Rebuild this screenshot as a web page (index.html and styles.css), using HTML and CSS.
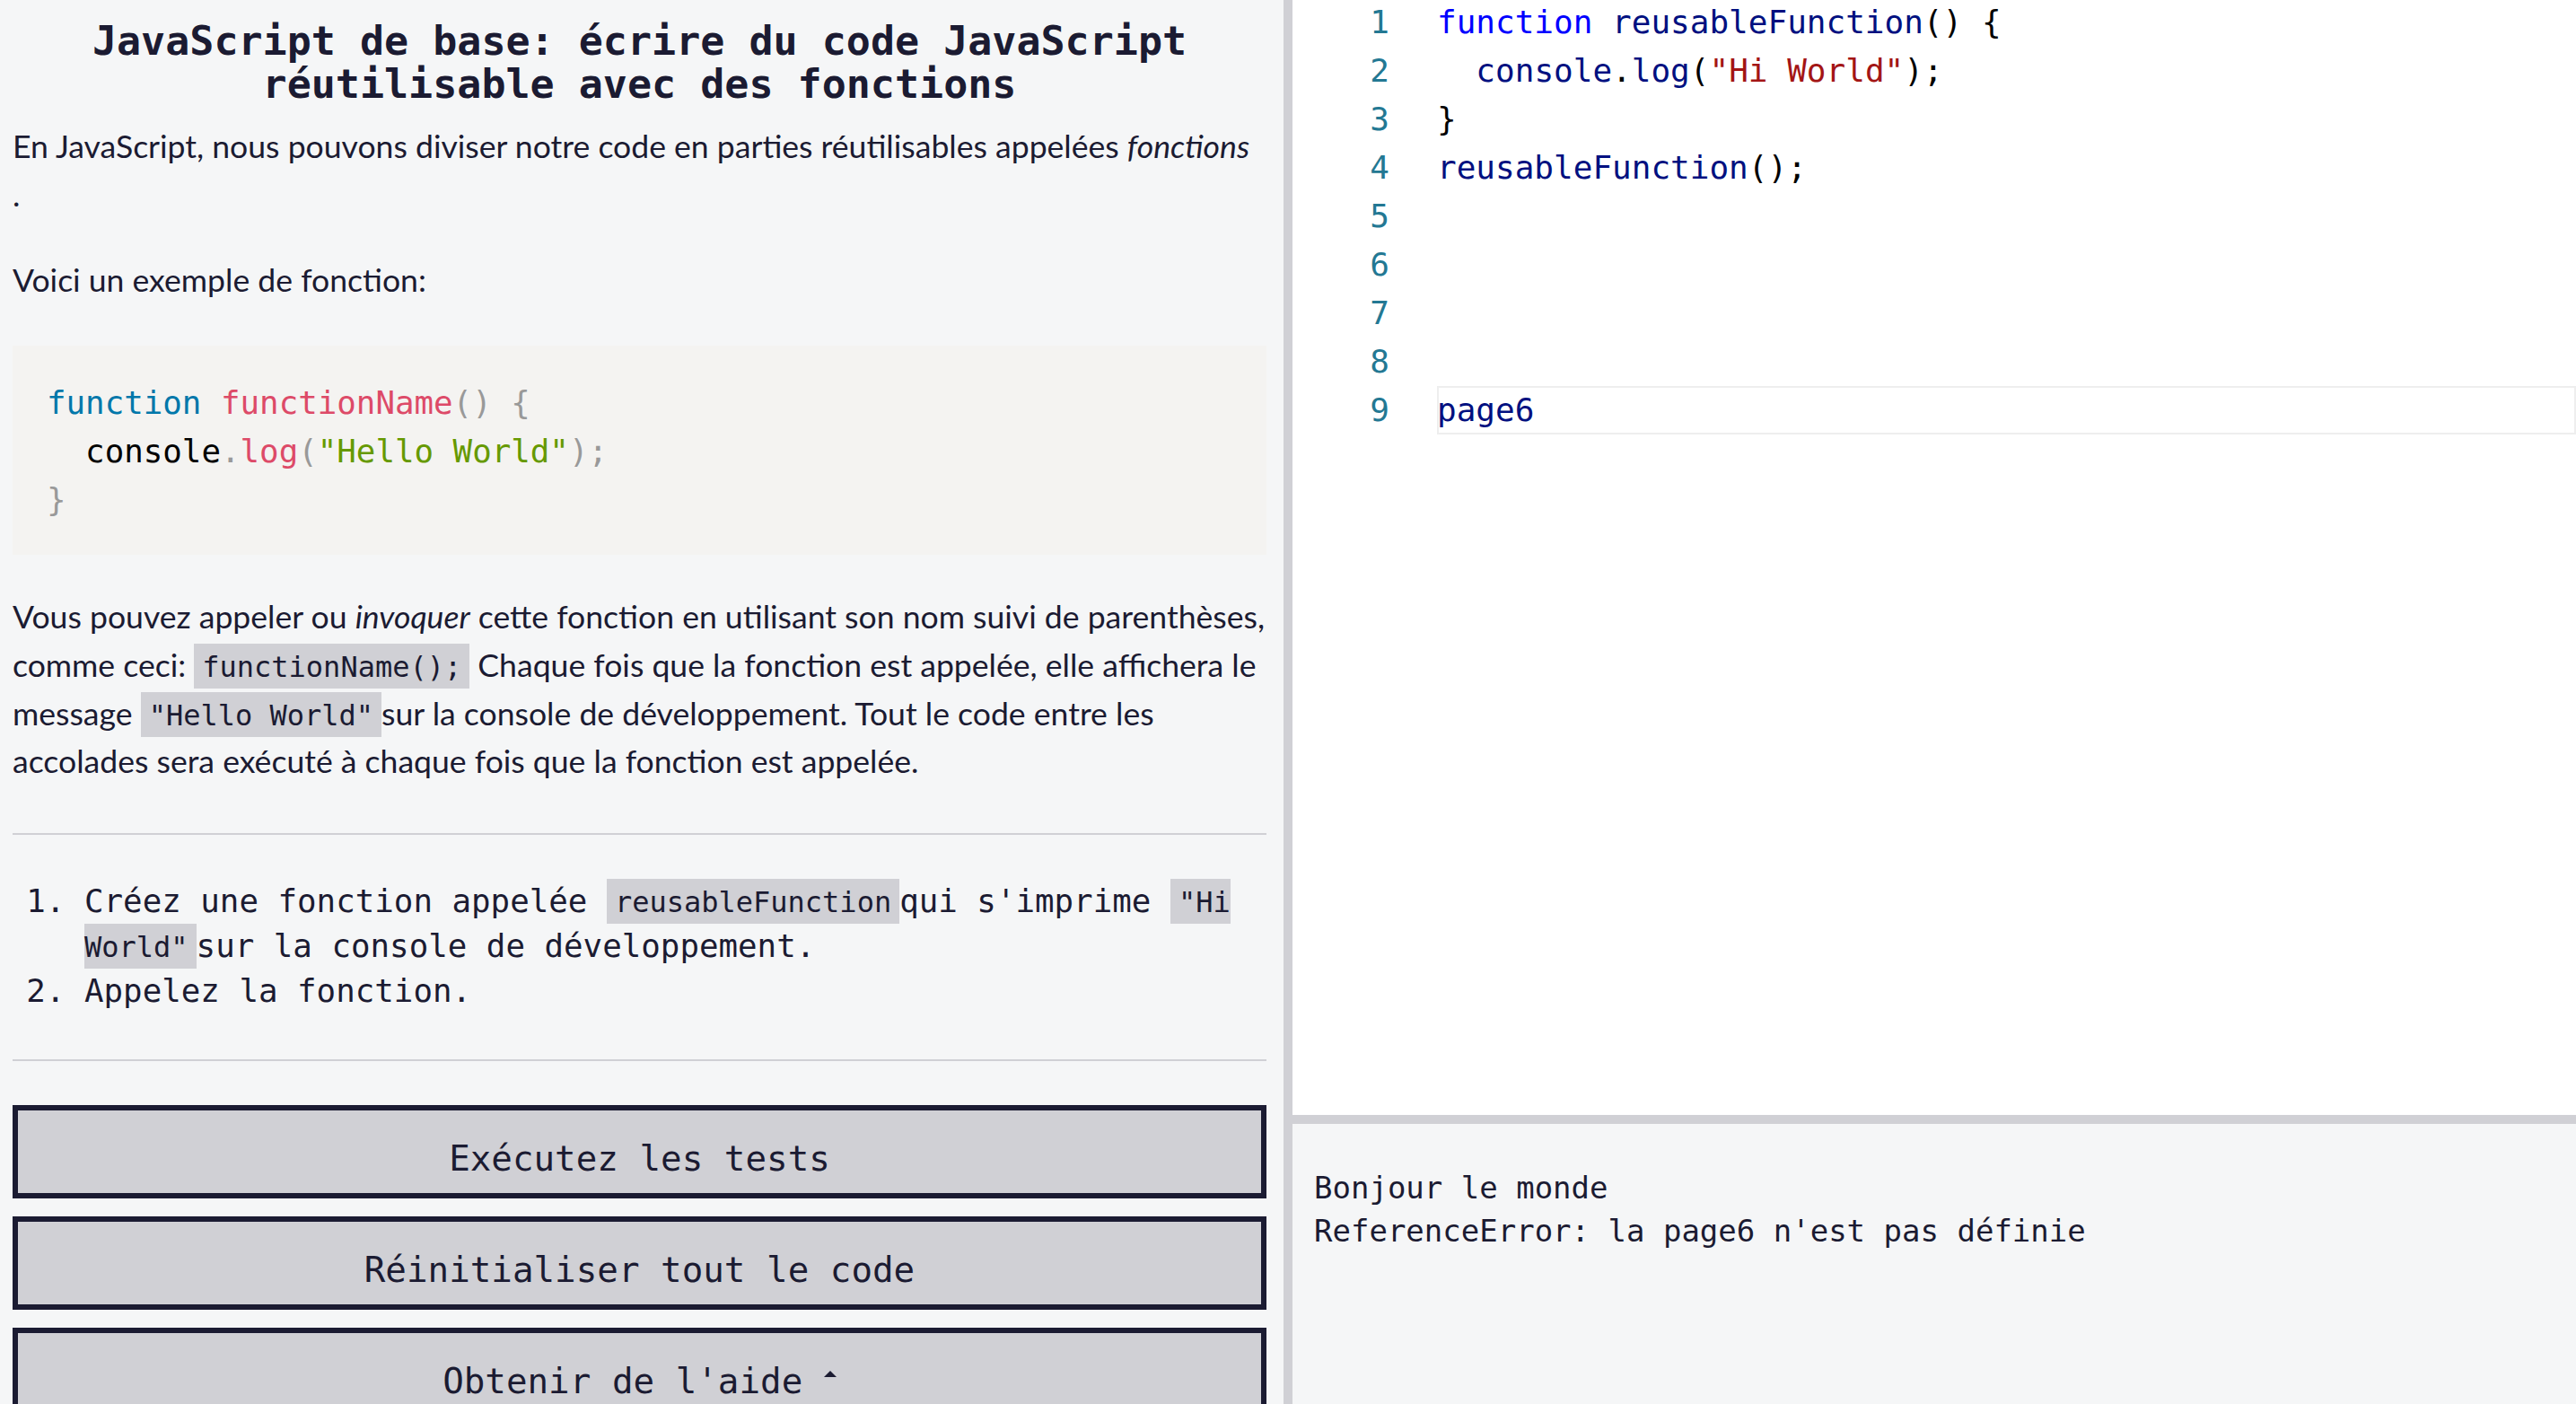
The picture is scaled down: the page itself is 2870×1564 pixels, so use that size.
FILE: index.html
```html
<!DOCTYPE html>
<html lang="fr">
<head>
<meta charset="utf-8">
<title>JavaScript de base: écrire du code JavaScript réutilisable avec des fonctions</title>
<link rel="stylesheet" href="styles.css">
</head>
<body>
<div class="app">
  <section class="instructions">
    <h1 class="title">JavaScript de base: écrire du code JavaScript réutilisable avec des fonctions</h1>
    <p class="text">En JavaScript, nous pouvons diviser notre code en parties réutilisables appelées <em>fonctions</em><br>.</p>
    <p class="text">Voici un exemple de fonction:</p>
    <pre class="example"><code><span class="tk">function</span> <span class="tf">functionName</span><span class="tp">()</span> <span class="tp">{</span>
  console<span class="tp">.</span><span class="tf">log</span><span class="tp">(</span><span class="ts">"Hello World"</span><span class="tp">);</span>
<span class="tp">}</span></code></pre>
    <p class="text">Vous pouvez appeler ou <em>invoquer</em> cette fonction en utilisant son nom suivi de parenthèses, comme ceci: <code class="ic">functionName();</code> Chaque fois que la fonction est appelée, elle affichera le message <code class="ic">"Hello World"</code>sur la console de développement. Tout le code entre les accolades sera exécuté à chaque fois que la fonction est appelée.</p>
    <hr class="rule">
    <ol class="tasks">
      <li>Créez une fonction appelée <code class="ic">reusableFunction</code>qui s'imprime <code class="ic">"Hi World"</code>sur la console de développement.</li>
      <li>Appelez la fonction.</li>
    </ol>
    <hr class="rule rule-second">
    <div class="actions">
      <button class="btn" type="button">Exécutez les tests</button>
      <button class="btn" type="button">Réinitialiser tout le code</button>
      <button class="btn" type="button">Obtenir de l'aide <span class="caret"></span></button>
    </div>
  </section>
  <div class="vsplit"></div>
  <section class="workspace">
    <div class="editor">
      <div class="lines">
        <div class="line"><span class="ln">1</span><span class="code"><span class="mk">function</span> <span class="mi">reusableFunction</span>() {</span></div>
        <div class="line"><span class="ln">2</span><span class="code">  <span class="mi">console</span>.<span class="mi">log</span>(<span class="ms">"Hi World"</span>);</span></div>
        <div class="line"><span class="ln">3</span><span class="code">}</span></div>
        <div class="line"><span class="ln">4</span><span class="code"><span class="mi">reusableFunction</span>();</span></div>
        <div class="line"><span class="ln">5</span><span class="code"></span></div>
        <div class="line"><span class="ln">6</span><span class="code"></span></div>
        <div class="line"><span class="ln">7</span><span class="code"></span></div>
        <div class="line"><span class="ln">8</span><span class="code"></span></div>
        <div class="line current"><span class="ln">9</span><span class="code"><span class="mi">page6</span></span></div>
      </div>
    </div>
    <div class="hsplit"></div>
    <pre class="console">Bonjour le monde
ReferenceError: la page6 n'est pas définie</pre>
  </section>
</div>
</body>
</html>
```

FILE: styles.css
```css
* {
  box-sizing: border-box;
}

html,
body {
  margin: 0;
  padding: 0;
}

body {
  font-family: Lato, "Noto Sans", sans-serif;
  color: #1b1b32;
  background: #f5f6f7;
  overflow: hidden;
}

.app {
  display: flex;
  width: 2870px;
  height: 1564px;
}

/* ---------- left: instructions ---------- */
.instructions {
  flex: none;
  width: 1430px;
  height: 1564px;
  padding: 0 19px 0 14px;
  overflow: hidden;
  background: #f5f6f7;
}

.title {
  margin: 22px 0 18px;
  font-family: "DejaVu Sans Mono", monospace;
  font-weight: bold;
  font-size: 45px;
  line-height: 48px;
  text-align: center;
  color: #1b1b32;
}

.text {
  margin: 0 0 42px;
  font-size: 35.6px;
  line-height: 53.7px;
}

.example {
  margin: 46px 0 42px;
  padding: 37px 38px 35px;
  background: #f4f3f1;
  font-family: "DejaVu Sans Mono", monospace;
  font-size: 35.8px;
  line-height: 53.7px;
  color: #000;
  white-space: pre;
}

.example code {
  font-family: inherit;
}

.tk { color: #07a; }
.tf { color: #dd4a68; }
.tp { color: #999; }
.ts { color: #690; }

.ic {
  font-family: "DejaVu Sans Mono", monospace;
  font-size: 32px;
  line-height: 1;
  padding: 7px 9px 5px;
  background: #d0d0d5;
  color: #1b1b32;
}

.rule {
  margin: 52.7px 0 49px;
  height: 2px;
  border: 0;
  background: #d0d0d5;
}

.rule-second {
  margin-top: 51px;
}

.tasks {
  margin: 0;
  padding-left: 80px;
  font-family: "DejaVu Sans Mono", monospace;
  font-size: 35.8px;
  line-height: 50px;
}

.actions {
  display: flex;
  flex-direction: column;
  gap: 20px;
}

.btn {
  display: block;
  width: 100%;
  margin: 0;
  padding: 31px 0 15px;
  border: 6px solid #1b1b32;
  background: #d0d0d5;
  color: #1b1b32;
  font-family: "DejaVu Sans Mono", monospace;
  font-size: 39.2px;
  line-height: 46px;
  text-align: center;
  cursor: pointer;
}

.caret {
  display: inline-block;
  width: 0;
  height: 0;
  border-left: 7px solid transparent;
  border-right: 7px solid transparent;
  border-bottom: 7px solid #1b1b32;
  vertical-align: 18px;
}

/* ---------- splitters ---------- */
.vsplit {
  flex: none;
  width: 10px;
  background: #d0d0d5;
}

.hsplit {
  flex: none;
  height: 10px;
  background: #d0d0d5;
}

/* ---------- right: editor + console ---------- */
.workspace {
  flex: 1;
  display: flex;
  flex-direction: column;
  min-width: 0;
}

.editor {
  flex: none;
  height: 1242px;
  background: #fff;
  overflow: hidden;
  font-family: "DejaVu Sans Mono", monospace;
  font-size: 36px;
  line-height: 54px;
}

.lines {
  margin-top: -2px;
}

.line {
  display: flex;
  height: 54px;
}

.ln {
  flex: none;
  width: 161px;
  padding-right: 53px;
  text-align: right;
  color: #237893;
}

.code {
  flex: 1;
  white-space: pre;
  color: #000;
}

.line.current .code {
  box-shadow: inset 0 0 0 2px #eeeeee;
}

.mk { color: #0000ff; }
.mi { color: #001080; }
.ms { color: #a31515; }

.console {
  flex: 1;
  margin: 0;
  padding: 48px 24px;
  background: #f5f6f7;
  font-family: "DejaVu Sans Mono", monospace;
  font-size: 34px;
  line-height: 47.5px;
  color: #1b1b32;
  white-space: pre;
}
```
